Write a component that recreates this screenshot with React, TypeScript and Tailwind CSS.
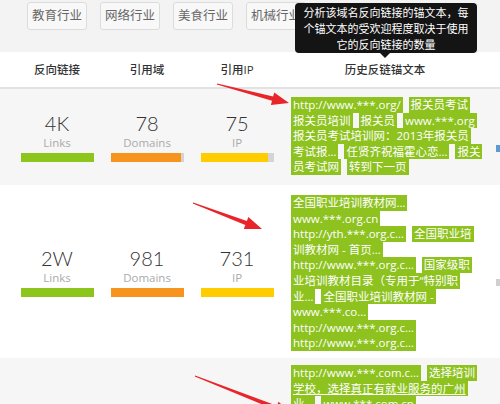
import React from 'react'

type Row = {
  stats: string[]
  fills: number[]
  bg: string
  h: string
  pt: string
  lines: string[][]
  underline?: number
  edge?: string
}

const rows: Row[] = [
  {
    stats: ['4K', '78', '75'],
    fills: [100, 97, 93],
    bg: 'bg-[#f6f6f6]',
    h: 'h-[96px]',
    pt: 'pt-[8px]',
    edge: 'bg-[#5b9bd5]',
    lines: [
      ['http://www.***.org/', '报关员考试'],
      ['报关员培训', '报关员', 'www.***.org'],
      ['报关员考试培训网：2013年报关员'],
      ['考试报…', '任贤齐祝福霍心恋…', '报关'],
      ['员考试网', '转到下一页'],
    ],
  },
  {
    stats: ['2W', '981', '731'],
    fills: [100, 100, 100],
    bg: 'bg-white',
    h: 'h-[173px]',
    pt: 'pt-[10px]',
    edge: 'bg-[#cfcfcf]',
    lines: [
      ['全国职业培训教材网…'],
      ['www.***.org.cn'],
      ['http://yth.***.org.c…', '全国职业培'],
      ['训教材网 - 首页…'],
      ['http://www.***.org.c…', '国家级职'],
      ['业培训教材目录（专用于“特别职'],
      ['业…', '全国职业培训教材网 -'],
      ['www.***.co…'],
      ['http://www.***.org.c…'],
      ['http://www.***.org.c…'],
    ],
  },
  {
    // numbers of this row sit below the visible area
    stats: [],
    fills: [],
    bg: 'bg-[#f6f6f6]',
    h: 'h-[180px]',
    pt: 'pt-[7px]',
    underline: 1,
    lines: [
      ['http://www.***.com.c…', '选择培训'],
      ['学校，选择真正有就业服务的广州'],
      ['业…', 'www.***.com.cn'],
    ],
  },
]

const barColors = ['bg-[#8cc51c]', 'bg-[#f7941d]', 'bg-[#ffcc00]']
const labels = ['Links', 'Domains', 'IP']

// arrow polygon from start to tip, tapering shaft + head
function arrow(x1: number, y1: number, x2: number, y2: number) {
  const dx = x2 - x1
  const dy = y2 - y1
  const len = Math.hypot(dx, dy)
  const ux = dx / len
  const uy = dy / len
  const px = -uy
  const py = ux
  const bx = x2 - ux * 17
  const by = y2 - uy * 17
  const pts = [
    [x1 + px * 0.6, y1 + py * 0.6],
    [bx + px * 2.2, by + py * 2.2],
    [bx + px * 6.5, by + py * 6.5],
    [x2, y2],
    [bx - px * 6.5, by - py * 6.5],
    [bx - px * 2.2, by - py * 2.2],
    [x1 - px * 0.6, y1 - py * 0.6],
  ]
  return pts.map((p) => p.join(',')).join(' ')
}

const font = { fontFamily: '"Open Sans", "Noto Sans CJK SC", sans-serif' }

export default function App() {
  return (
    <div className="relative w-[500px] h-[404px] overflow-hidden bg-white text-[#333]" style={font}>
      {/* industry filter */}
      <div className="h-[52px] bg-[#f3f3f3] flex items-start gap-[13px] pl-[27px] pt-[2px]">
        {['教育行业', '网络行业', '美食行业', '机械行业'].map((t) => (
          <div
            key={t}
            className="h-[28px] w-[60px] shrink-0 flex items-center justify-center rounded-[3px] border border-[#dcdcdc] bg-[#f8f8f8] text-[12.5px] text-[#666]"
          >
            {t}
          </div>
        ))}
      </div>

      {/* table header */}
      <div className="h-[37px] flex items-center pl-[12px] border-b-2 border-[#e2e2e2] text-[11.5px] font-medium text-[#333]">
        <div className="w-[90px] text-center">反向链接</div>
        <div className="w-[90px] text-center">引用域</div>
        <div className="w-[90px] text-center">引用IP</div>
        <div className="w-[206px] text-center">历史反链锚文本</div>
      </div>

      {rows.map((r, ri) => (
        <div key={ri} className={`flex pl-[12px] ${r.bg} ${r.h}`}>
          {[0, 1, 2].map((i) => (
            <div key={i} className="w-[90px] flex flex-col items-center justify-center">
              {r.stats[i] && (
                <>
                  <div className="text-[20px] leading-[22px] font-light text-[#333]" style={{ fontFamily: 'Lato, "Open Sans", sans-serif' }}>
                    {r.stats[i]}
                  </div>
                  <div className="text-[11.5px] leading-[16px] text-[#aaa] mt-[1px]">{labels[i]}</div>
                  <div className="w-[73px] h-[9px] bg-[#d4d4d4] mt-[2px] flex">
                    <div className={`h-full ${barColors[i]}`} style={{ width: `${r.fills[i]}%` }} />
                  </div>
                </>
              )}
            </div>
          ))}
          <div className={`w-[206px] pl-[9px] ${r.pt} flex flex-col text-[11.5px] leading-[15.6px] text-white`}>
            {r.lines.map((ln, li) => (
              <div key={li} className="flex gap-[6px] h-[15.6px] whitespace-nowrap">
                {ln.map((c, ci) => (
                  <span
                    key={ci}
                    className={`bg-[#8dc21f] px-[2px] ${r.underline === li ? 'underline' : ''}`}
                  >
                    {c}
                  </span>
                ))}
              </div>
            ))}
          </div>
          <div className="flex-1 flex flex-col justify-center items-end">
            {r.edge && <div className={`w-[4px] h-[7px] mt-[22px] ${r.edge}`} />}
          </div>
        </div>
      ))}

      {/* tooltip */}
      <div className="absolute left-[295px] top-[3px] w-[182px] h-[50px] rounded-[4px] bg-[#141414] text-white text-[11px] leading-[16px] text-center pt-[2px]">
        <div>分析该域名反向链接的锚文本，每</div>
        <div>个锚文本的受欢迎程度取决于使用</div>
        <div>它的反向链接的数量</div>
        <div className="absolute left-[85px] -bottom-[5px] w-0 h-0 border-l-[5px] border-r-[5px] border-t-[5px] border-l-transparent border-r-transparent border-t-[#141414]" />
      </div>

      {/* red arrows */}
      <svg className="absolute inset-0 pointer-events-none" width="500" height="404">
        <polygon points={arrow(217, 84, 289, 103)} fill="#e8262a" />
        <polygon points={arrow(193, 203, 262, 229)} fill="#e8262a" />
        <polygon points={arrow(195, 376, 292, 414)} fill="#e8262a" />
      </svg>
    </div>
  )
}
